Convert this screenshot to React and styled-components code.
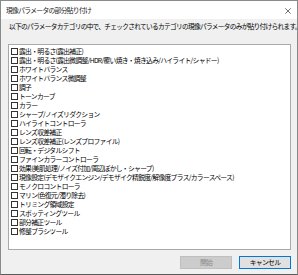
import styled, { createGlobalStyle } from "styled-components";

const Global = createGlobalStyle`
  html, body { margin: 0; padding: 0; background: #ffffff; }
  body { font-family: "Noto Sans CJK JP", "Noto Sans", sans-serif; }
`;

const Window = styled.div`
  width: 298px;
  height: 275px;
  box-sizing: border-box;
  border: 1px solid #8a8a8a;
  border-bottom-color: #5a5a5a;
  display: flex;
  flex-direction: column;
  background: #f0f0f0;
  color: #000;
  font-size: 6.8px;
  letter-spacing: -0.7px;
  line-height: 1;
`;

const TitleBar = styled.div`
  height: 18px;
  background: #ffffff;
  display: flex;
  align-items: center;
  justify-content: space-between;
  padding: 0 6px 0 5px;
  flex-shrink: 0;
`;

const Title = styled.span`
  color: #1a1a1a;
`;

const CloseIcon = styled.svg`
  width: 6px;
  height: 6px;
  margin-top: 1px;
`;

const Body = styled.div`
  flex: 1;
  display: flex;
  flex-direction: column;
  padding: 1px 5px 5px 7px;
`;

const Description = styled.div`
  margin-left: 1px;
  height: 12px;
  display: flex;
  align-items: center;
  white-space: nowrap;
`;

const DescText = styled.span`
  font-size: 6.7px;
  letter-spacing: -0.7px;
  overflow: visible;
`;

const ListBox = styled.div`
  margin-top: 12px;
  margin-right: 1px;
  height: 206px;
  box-sizing: border-box;
  background: #ffffff;
  border: 1px solid #a9a9a9;
  padding: 2px 0 0 2px;
  display: flex;
  flex-direction: column;
`;

const Row = styled.label`
  height: 9px;
  display: flex;
  align-items: center;
  gap: 1px;
  white-space: nowrap;
`;

const Box = styled.span`
  width: 7px;
  height: 7px;
  box-sizing: border-box;
  border: 1px solid #333333;
  background: #ffffff;
  flex-shrink: 0;
`;

const Footer = styled.div`
  margin-top: 6px;
  margin-right: 1px;
  display: flex;
  justify-content: flex-end;
  gap: 7px;
`;

const Button = styled.button`
  width: 52px;
  height: 13px;
  box-sizing: border-box;
  padding: 0;
  font-family: inherit;
  font-size: 6.8px;
  letter-spacing: -0.7px;
  line-height: 1;
  border: 1px solid ${({ primary }) => (primary ? "#0078d7" : "#bfbfbf")};
  background: ${({ primary }) => (primary ? "#e1e1e1" : "#cccccc")};
  color: ${({ disabled }) => (disabled ? "#8c8c8c" : "#000000")};
`;

const items = [
  "露出・明るさ(露出補正)",
  "露出・明るさ(露出微調整/HDR/覆い焼き・焼き込み/ハイライト/シャドー)",
  "ホワイトバランス",
  "ホワイトバランス微調整",
  "調子",
  "トーンカーブ",
  "カラー",
  "シャープ/ノイズリダクション",
  "ハイライトコントローラ",
  "レンズ収差補正",
  "レンズ収差補正(レンズプロファイル)",
  "回転・デジタルシフト",
  "ファインカラーコントローラ",
  "効果(美肌処理/ノイズ付加/周辺ぼかし・シャープ)",
  "現像設定(デモザイクエンジン/デモザイク精鋭度/解像度プラス/カラースペース)",
  "モノクロコントローラ",
  "マリン(色復元/濁り除去)",
  "トリミング領域設定",
  "スポッティングツール",
  "部分補正ツール",
  "修整ブラシツール",
];

export default function App() {
  return (
    <>
      <Global />
      <Window>
        <TitleBar>
          <Title>現像パラメータの部分貼り付け</Title>
          <CloseIcon viewBox="0 0 6 6">
            <path d="M0.3 0.3L5.7 5.7M5.7 0.3L0.3 5.7" stroke="#333" strokeWidth="0.7" fill="none" />
          </CloseIcon>
        </TitleBar>
        <Body>
          <Description>
            <DescText>
              以下のパラメータカテゴリの中で、チェックされているカテゴリの現像パラメータのみが貼り付けられます。
            </DescText>
          </Description>
          <ListBox>
            {items.map((t) => (
              <Row key={t}>
                <Box />
                {t}
              </Row>
            ))}
          </ListBox>
          <Footer>
            <Button disabled>開始</Button>
            <Button primary>キャンセル</Button>
          </Footer>
        </Body>
      </Window>
    </>
  );
}
